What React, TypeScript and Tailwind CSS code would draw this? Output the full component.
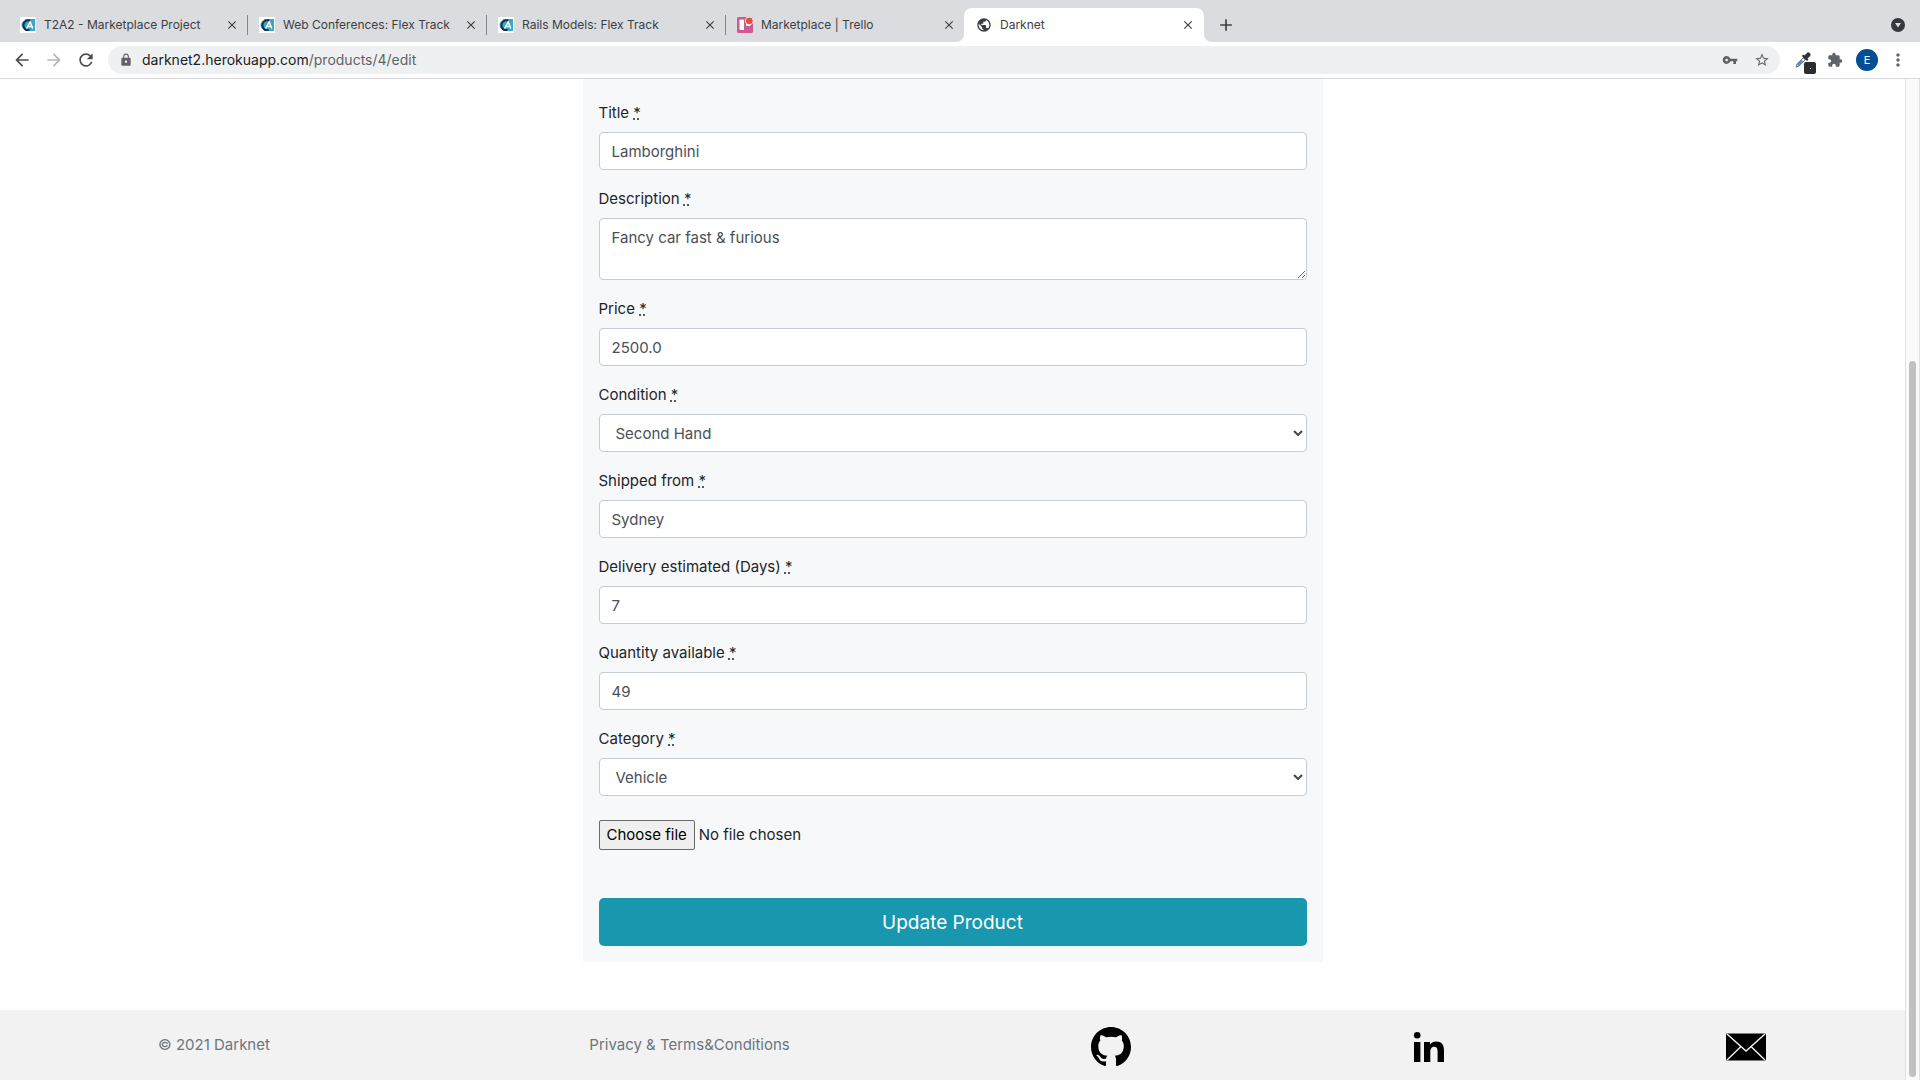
import React from "react";
import { MdStarBorder, MdVpnKey, MdExtension, MdMoreVert, MdPublic, MdLock, MdArrowBack, MdArrowForward, MdRefresh, MdClose, MdAdd } from "react-icons/md";

function AcademyIcon() {
  return (
    <svg viewBox="0 0 16 16" className="size-4 shrink-0" aria-hidden="true">
      <rect width="16" height="16" fill="#fff" />
      <path d="M5 2h10v12H5z" fill="#3ba6c6" />
      <circle cx="6.500" cy="8" r="5" fill="#3ba6c6" />
      <path d="M10.500 3.600A4.900 4.900 0 1 0 6.500 13h3" fill="none" stroke="#12304a" strokeWidth="2" />
      <path d="M6.600 11.500 10.200 5 12.800 11.500M8.400 9.600h3.600" fill="none" stroke="#fff" strokeWidth="1.500" />
    </svg>
  );
}

function TrelloIcon() {
  return (
    <svg viewBox="0 0 16 16" className="size-4 shrink-0" aria-hidden="true">
      <rect width="16" height="16" rx="1.5" fill="#cd5a91" />
      <rect x="2.5" y="2.5" width="4.5" height="10.5" rx="1" fill="#fff" />
      <rect x="9" y="2.5" width="4.5" height="6.5" rx="1" fill="#fff" />
      <circle cx="12.3" cy="3.8" r="4.2" fill="#fff" />
      <circle cx="12.3" cy="3.8" r="3.4" fill="#eb4b35" />
    </svg>
  );
}

function EyedropperIcon() {
  return (
    <svg viewBox="0 0 16 16" className="size-4" aria-hidden="true">
      <path d="M1 15 2 12 9 5 11 7 4 14z" fill="#e8f1f8" stroke="#777" strokeWidth="1" />
      <path d="M2.6 13.4 7.4 8.6" stroke="#3f9be0" strokeWidth="2.2" />
      <path d="m7.6 3.2 5.2 5.2" stroke="#333" strokeWidth="2" />
      <path d="m10.600 5.400 2.700-2.700" stroke="#333" strokeWidth="4.400" strokeLinecap="round" />
    </svg>
  );
}

const tabs = [
  { title: "T2A2 - Marketplace Project", icon: <AcademyIcon /> },
  { title: "Web Conferences: Flex Track", icon: <AcademyIcon /> },
  { title: "Rails Models: Flex Track", icon: <AcademyIcon /> },
  { title: "Marketplace | Trello", icon: <TrelloIcon /> },
];

function TabStrip() {
  return (
    <div className="flex h-[42px] shrink-0 bg-[#dadce0] pl-2 text-[12px] text-[#3c4043]">
      {tabs.map((tab, i) => (
        <div key={tab.title} className="flex w-[239px] items-center pt-2">
          <div className={`flex h-5 w-full items-center border-l pr-2 pl-[11px] ${i > 0 ? "border-[#80868b]" : "border-transparent"}`}>
            {tab.icon}
            <span className="ml-2 grow truncate">{tab.title}</span>
            <button aria-label={`Close ${tab.title}`}><MdClose className="size-3.5" /></button>
          </div>
        </div>
      ))}
      <div className="relative mt-2 flex w-[240px] items-center rounded-t-lg bg-white pr-[9px] pl-3">
        <svg viewBox="0 0 8 8" className="absolute bottom-0 -left-2 size-2" aria-hidden="true"><path d="M8 0v8H0a8 8 0 0 0 8-8" fill="#fff" /></svg>
        <svg viewBox="0 0 8 8" className="absolute -right-2 bottom-0 size-2" aria-hidden="true"><path d="M0 0v8h8a8 8 0 0 1-8-8" fill="#fff" /></svg>
        <MdPublic className="size-4 shrink-0" />
        <span className="ml-2 grow">Darknet</span>
        <button aria-label="Close Darknet"><MdClose className="size-3.5" /></button>
      </div>
      <button aria-label="New tab" className="mt-2 ml-3 self-center"><MdAdd className="size-5" /></button>
      <button aria-label="Search tabs" className="mt-2 mr-[15px] ml-auto self-center">
        <svg viewBox="0 0 14 14" className="size-3.5" aria-hidden="true"><circle cx="7" cy="7" r="7" fill="#35393d" /><path d="M4 5h6L7 9.5z" fill="#dadce0" /></svg>
      </button>
    </div>
  );
}

function Toolbar() {
  return (
    <div className="flex h-[37px] shrink-0 items-center border-b border-[#d5d7db] bg-white px-3 text-[#5f6368]">
      <button aria-label="Back" className="text-[#4a4d51]"><MdArrowBack className="size-5" /></button>
      <button aria-label="Forward" className="ml-3 text-[#b4b6b9]"><MdArrowForward className="size-5" /></button>
      <button aria-label="Reload" className="ml-3 text-[#4a4d51]"><MdRefresh className="size-5" /></button>
      <div className="ml-3 flex h-7 grow items-center rounded-full bg-[#eff0f2] pr-[10px] pl-[11px]">
        <MdLock className="size-[14px]" />
        <a href="#address" className="ml-[9px] grow pb-0.5 text-[14px]">
          <span className="text-[#202124]">darknet2.herokuapp.com</span>/products/4/edit
        </a>
        <button aria-label="Passwords"><MdVpnKey className="size-4" /></button>
        <button aria-label="Bookmark" className="ml-4"><MdStarBorder className="size-4" /></button>
      </div>
      <button aria-label="Color picker" className="relative ml-[15px]">
        <EyedropperIcon />
        <span className="absolute top-2.5 left-[9px] flex size-3 items-center justify-center rounded-xs bg-[#2b2e31]"><span className="size-px bg-white" /></span>
      </button>
      <button aria-label="Extensions" className="ml-4"><MdExtension className="size-4" /></button>
      <button aria-label="Profile" className="ml-[13px] size-[22px] rounded-full bg-[#044e94] text-[11px] text-white">E</button>
      <button aria-label="Menu" className="ml-2.5"><MdMoreVert className="size-5" /></button>
    </div>
  );
}

const control = "block w-full rounded border border-[#c5ccd3] bg-white px-3 text-[15px] leading-6 text-[#495057]";

function Field({ id, label, children }: { id: string; label: string; children: React.ReactNode }) {
  return (
    <div className="mb-4">
      <label htmlFor={id} className="mb-2 block pt-0.5 leading-[22px]">
        {label} <abbr title="required" className="underline decoration-dotted">*</abbr>
      </label>
      {children}
    </div>
  );
}

function TextField({ id, label, value }: { id: string; label: string; value: string }) {
  return (
    <Field id={id} label={label}>
      <input id={id} defaultValue={value} className={`${control} h-[38px]`} />
    </Field>
  );
}

function SelectField({ id, label, value }: { id: string; label: string; value: string }) {
  return (
    <Field id={id} label={label}>
      <div className="relative">
        <select id={id} className={`${control} h-[38px] appearance-none pt-0.5 pl-4`}>
          <option>{value}</option>
        </select>
        <svg viewBox="0 0 10 6" className="pointer-events-none absolute top-4 right-1 h-1.5 w-2.5" aria-hidden="true">
          <path d="M1 1l4 4 4-4" fill="none" stroke="#43484e" strokeWidth="2" />
        </svg>
      </div>
    </Field>
  );
}

function Footer() {
  return (
    <footer className="flex h-[70px] items-center justify-between bg-[#f2f2f2] pr-[139px] pl-[158px] text-[#6c757d]">
      <p className="pr-[42px]">© 2021 Darknet</p>
      <a href="#terms" className="pr-[24px]">Privacy &amp; Terms&amp;Conditions</a>
      <a href="#github" aria-label="GitHub" className="mt-1 text-black">
        <svg viewBox="0 0 16 16" className="size-10" fill="currentColor">
          <path d="M8 0C3.58 0 0 3.58 0 8c0 3.54 2.29 6.53 5.47 7.59.4.07.55-.17.55-.38 0-.19-.01-.82-.01-1.49-2.01.37-2.53-.49-2.69-.94-.09-.23-.48-.94-.82-1.13-.28-.15-.68-.52-.01-.53.63-.01 1.08.58 1.23.82.72 1.21 1.87.87 2.33.66.07-.52.28-.87.51-1.07-1.78-.2-3.64-.89-3.64-3.95 0-.87.31-1.59.82-2.15-.08-.2-.36-1.02.08-2.12 0 0 .67-.21 2.2.82.64-.18 1.32-.27 2-.27s1.36.09 2 .27c1.53-1.04 2.2-.82 2.2-.82.44 1.1.16 1.92.08 2.12.51.56.82 1.27.82 2.15 0 3.07-1.87 3.75-3.65 3.95.29.25.54.73.54 1.48 0 1.07-.01 1.93-.01 2.2 0 .21.15.46.55.38A8.01 8.01 0 0 0 16 8c0-4.42-3.58-8-8-8" />
        </svg>
      </a>
      <a href="#linkedin" aria-label="LinkedIn" className="mt-1 text-black">
        <svg viewBox="0 0 40 40" className="size-10" fill="currentColor">
          <circle cx="8.2" cy="8.2" r="3.3" />
          <path d="M5 15h6.4v20H5zM15 15h6v2.8c1-1.9 3.1-3.3 6.2-3.3 6.2 0 7.8 4 7.8 9.6V35h-6.400V25.300c0-2.800-.2-5.600-3.400-5.600s-3.900 2.600-3.900 5.500V35H15z" />
        </svg>
      </a>
      <a href="#mail" aria-label="Email" className="mt-1 text-black">
        <svg viewBox="0 0 40 40" className="size-10" aria-hidden="true">
          <rect y="6.500" width="40" height="27" rx="1" />
          <path d="M1 7l19 17L39 7M1 33l14-13.500M39 33 25 19.500" fill="none" stroke="#f2f2f2" strokeWidth="1.400" />
        </svg>
      </a>
    </footer>
  );
}

export default function App() {
  return (
    <div className="flex h-screen flex-col overflow-hidden bg-white font-['Inter',sans-serif]">
      <TabStrip />
      <Toolbar />
      <div className="flex min-h-0 grow">
        <main className="min-w-0 grow overflow-hidden text-[15px] text-[#212529]">
          <form className="mx-auto mb-12 w-full max-w-[740px] bg-[#f7f8fa] px-4 pt-[21px] pb-4">
            <TextField id="title" label="Title" value="Lamborghini" />
            <Field id="description" label="Description">
              <textarea id="description" defaultValue="Fancy car fast & furious" className={`${control} h-[62px] py-[7px]`} />
            </Field>
            <TextField id="price" label="Price" value="2500.0" />
            <SelectField id="condition" label="Condition" value="Second Hand" />
            <TextField id="shipped" label="Shipped from" value="Sydney" />
            <TextField id="delivery" label="Delivery estimated (Days)" value="7" />
            <TextField id="quantity" label="Quantity available" value="49" />
            <SelectField id="category" label="Category" value="Vehicle" />
            <div className="relative mt-6 mb-12 flex h-[30px] items-center">
              <input id="picture" type="file" className="peer sr-only" />
              <label htmlFor="picture" className="flex h-[30px] items-center rounded-xs border border-[#6b6b6b] bg-[#efefef] px-[7px] text-black peer-focus-visible:outline-2">
                Choose file
              </label>
              <span className="ml-1">No file chosen</span>
            </div>
            <button type="button" className="h-12 w-full rounded-[5px] bg-[#1997af] pt-0.5 text-[19px] text-white">Update Product</button>
          </form>
          <Footer />
        </main>
        <div className="flex w-[15px] shrink-0 flex-col justify-end border-x border-[#e2e2e2] bg-[#fafafa] px-[3px] pb-[3px]">
          <div className="h-[716px] w-full rounded-full bg-[#c1c1c1]" />
        </div>
      </div>
    </div>
  );
}
